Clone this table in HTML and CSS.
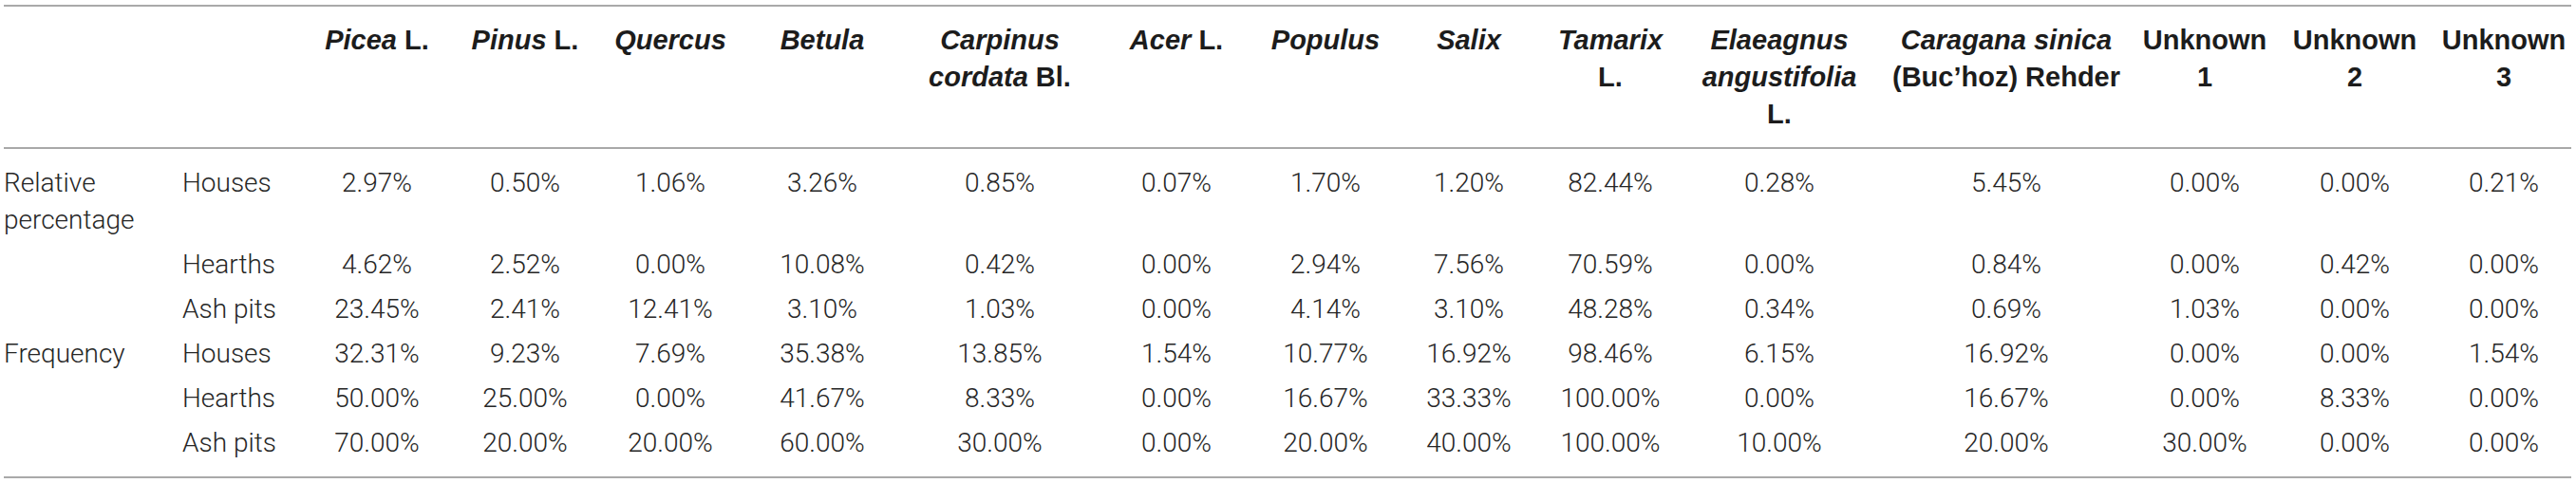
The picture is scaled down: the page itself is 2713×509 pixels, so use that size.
FILE: index.html
```html
<!DOCTYPE html>
<html lang="en">
<head>
<meta charset="utf-8">
<title>Charcoal taxa table</title>
<link rel="stylesheet" href="styles.css">
</head>
<body>
<table class="data">
  <colgroup>
    <col class="c-group">
    <col class="c-feat">
    <col class="w166"><col class="w146"><col class="w160"><col class="w160"><col class="w214">
    <col class="w158"><col class="w156"><col class="w146"><col class="w152"><col class="w204">
    <col class="w274"><col class="w144"><col class="w172"><col class="w142">
  </colgroup>
  <thead>
    <tr>
      <th></th>
      <th></th>
      <th><i>Picea</i> L.</th>
      <th><i>Pinus</i> L.</th>
      <th><i>Quercus</i></th>
      <th><i>Betula</i></th>
      <th><i>Carpinus</i><br><i>cordata</i> Bl.</th>
      <th><i>Acer</i> L.</th>
      <th><i>Populus</i></th>
      <th><i>Salix</i></th>
      <th><i>Tamarix</i><br>L.</th>
      <th><i>Elaeagnus</i><br><i>angustifolia</i><br>L.</th>
      <th><i>Caragana sinica</i><br>(Buc’hoz) Rehder</th>
      <th>Unknown<br>1</th>
      <th>Unknown<br>2</th>
      <th>Unknown<br>3</th>
    </tr>
  </thead>
  <tbody>
    <tr class="first">
      <td class="lab">Relative<br>percentage</td>
      <td class="lab">Houses</td>
      <td>2.97%</td><td>0.50%</td><td>1.06%</td><td>3.26%</td><td>0.85%</td><td>0.07%</td><td>1.70%</td><td>1.20%</td><td>82.44%</td><td>0.28%</td><td>5.45%</td><td>0.00%</td><td>0.00%</td><td>0.21%</td>
    </tr>
    <tr>
      <td class="lab"></td>
      <td class="lab">Hearths</td>
      <td>4.62%</td><td>2.52%</td><td>0.00%</td><td>10.08%</td><td>0.42%</td><td>0.00%</td><td>2.94%</td><td>7.56%</td><td>70.59%</td><td>0.00%</td><td>0.84%</td><td>0.00%</td><td>0.42%</td><td>0.00%</td>
    </tr>
    <tr>
      <td class="lab"></td>
      <td class="lab">Ash pits</td>
      <td>23.45%</td><td>2.41%</td><td>12.41%</td><td>3.10%</td><td>1.03%</td><td>0.00%</td><td>4.14%</td><td>3.10%</td><td>48.28%</td><td>0.34%</td><td>0.69%</td><td>1.03%</td><td>0.00%</td><td>0.00%</td>
    </tr>
    <tr>
      <td class="lab">Frequency</td>
      <td class="lab">Houses</td>
      <td>32.31%</td><td>9.23%</td><td>7.69%</td><td>35.38%</td><td>13.85%</td><td>1.54%</td><td>10.77%</td><td>16.92%</td><td>98.46%</td><td>6.15%</td><td>16.92%</td><td>0.00%</td><td>0.00%</td><td>1.54%</td>
    </tr>
    <tr>
      <td class="lab"></td>
      <td class="lab">Hearths</td>
      <td>50.00%</td><td>25.00%</td><td>0.00%</td><td>41.67%</td><td>8.33%</td><td>0.00%</td><td>16.67%</td><td>33.33%</td><td>100.00%</td><td>0.00%</td><td>16.67%</td><td>0.00%</td><td>8.33%</td><td>0.00%</td>
    </tr>
    <tr class="last">
      <td class="lab"></td>
      <td class="lab">Ash pits</td>
      <td>70.00%</td><td>20.00%</td><td>20.00%</td><td>60.00%</td><td>30.00%</td><td>0.00%</td><td>20.00%</td><td>40.00%</td><td>100.00%</td><td>10.00%</td><td>20.00%</td><td>30.00%</td><td>0.00%</td><td>0.00%</td>
    </tr>
  </tbody>
</table>
</body>
</html>
```

FILE: styles.css
```css
html, body {
  margin: 0;
  padding: 0;
  background: #ffffff;
}

.data {
  margin: 5px 0 0 4px;
  width: 2704px;
  table-layout: fixed;
  border-collapse: separate;
  border-spacing: 0;
  border-top: 2px solid #a9a9a9;
  border-bottom: 2px solid #a9a9a9;
}

.c-group { width: 188px; }
.c-feat { width: 122px; }
.w142 { width: 142px; }
.w144 { width: 144px; }
.w146 { width: 146px; }
.w152 { width: 152px; }
.w156 { width: 156px; }
.w158 { width: 158px; }
.w160 { width: 160px; }
.w166 { width: 166px; }
.w172 { width: 172px; }
.w204 { width: 204px; }
.w214 { width: 214px; }
.w274 { width: 274px; }

.data th {
  font-family: "Liberation Sans", Arial, sans-serif;
  font-weight: 700;
  font-size: 29px;
  line-height: 39px;
  color: #1c1c1c;
  text-align: center;
  vertical-align: top;
  padding: 15.5px 0;
  border-bottom: 2px solid #a9a9a9;
  white-space: nowrap;
}

.data th i {
  font-style: italic;
}

.data td {
  font-family: Roboto, "Liberation Sans", sans-serif;
  font-weight: 300;
  font-size: 28px;
  line-height: 39px;
  color: #262626;
  text-align: center;
  vertical-align: top;
  padding: 4px 0;
  white-space: nowrap;
}

.data td.lab {
  text-align: left;
}

.data tr.first td {
  padding-top: 16px;
}

.data tr.last td {
  padding-bottom: 16px;
}
```
